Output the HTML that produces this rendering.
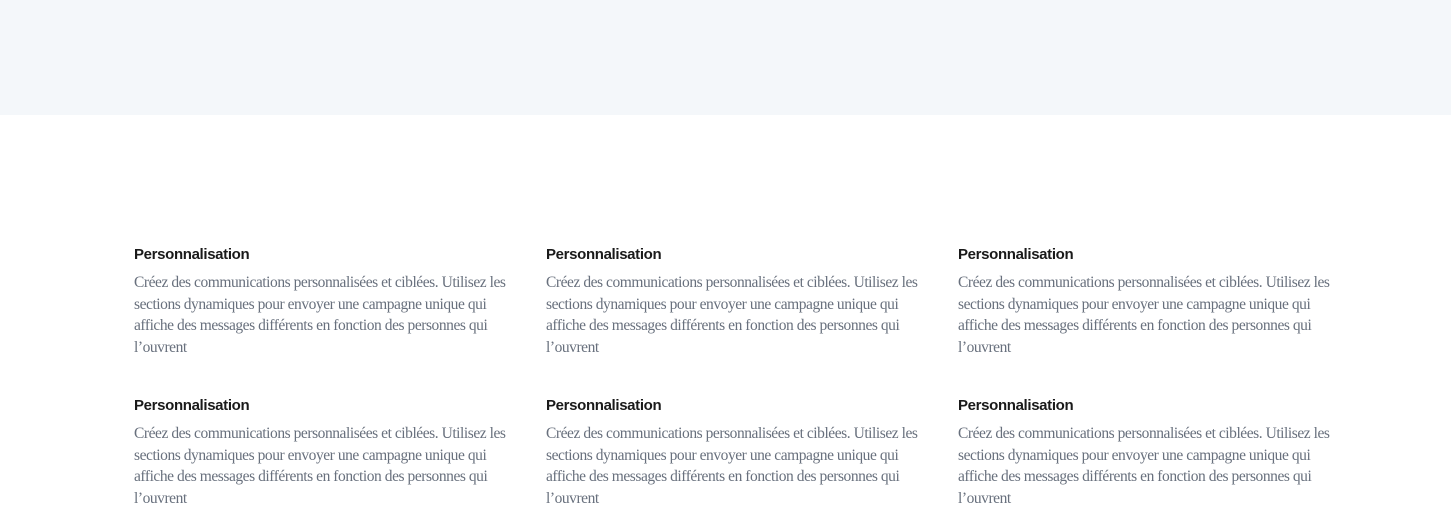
<!DOCTYPE html>
<html><head><meta charset="utf-8"><style>
body{margin:0;width:1451px;height:505px;background:#fff;overflow:hidden}
.top{height:115px;background:#f4f7fa}
.item{position:absolute;width:385px}
h3{margin:0;font:bold 15px/18px "Liberation Sans",sans-serif;color:#1a1a1a;letter-spacing:-0.35px}
p{margin:8px 0 0;font:15.5px/21.7px "Liberation Serif",serif;color:#68707d;letter-spacing:-0.45px}
</style></head><body>
<div class="top"></div>
<div class="item" style="left:134px;top:246px"><h3>Personnalisation</h3><p>Créez des communications personnalisées et ciblées. Utilisez les sections dynamiques pour envoyer une campagne unique qui affiche des messages différents en fonction des personnes qui l’ouvrent</p></div>
<div class="item" style="left:546px;top:246px"><h3>Personnalisation</h3><p>Créez des communications personnalisées et ciblées. Utilisez les sections dynamiques pour envoyer une campagne unique qui affiche des messages différents en fonction des personnes qui l’ouvrent</p></div>
<div class="item" style="left:958px;top:246px"><h3>Personnalisation</h3><p>Créez des communications personnalisées et ciblées. Utilisez les sections dynamiques pour envoyer une campagne unique qui affiche des messages différents en fonction des personnes qui l’ouvrent</p></div>
<div class="item" style="left:134px;top:397px"><h3>Personnalisation</h3><p>Créez des communications personnalisées et ciblées. Utilisez les sections dynamiques pour envoyer une campagne unique qui affiche des messages différents en fonction des personnes qui l’ouvrent</p></div>
<div class="item" style="left:546px;top:397px"><h3>Personnalisation</h3><p>Créez des communications personnalisées et ciblées. Utilisez les sections dynamiques pour envoyer une campagne unique qui affiche des messages différents en fonction des personnes qui l’ouvrent</p></div>
<div class="item" style="left:958px;top:397px"><h3>Personnalisation</h3><p>Créez des communications personnalisées et ciblées. Utilisez les sections dynamiques pour envoyer une campagne unique qui affiche des messages différents en fonction des personnes qui l’ouvrent</p></div>
</body></html>
